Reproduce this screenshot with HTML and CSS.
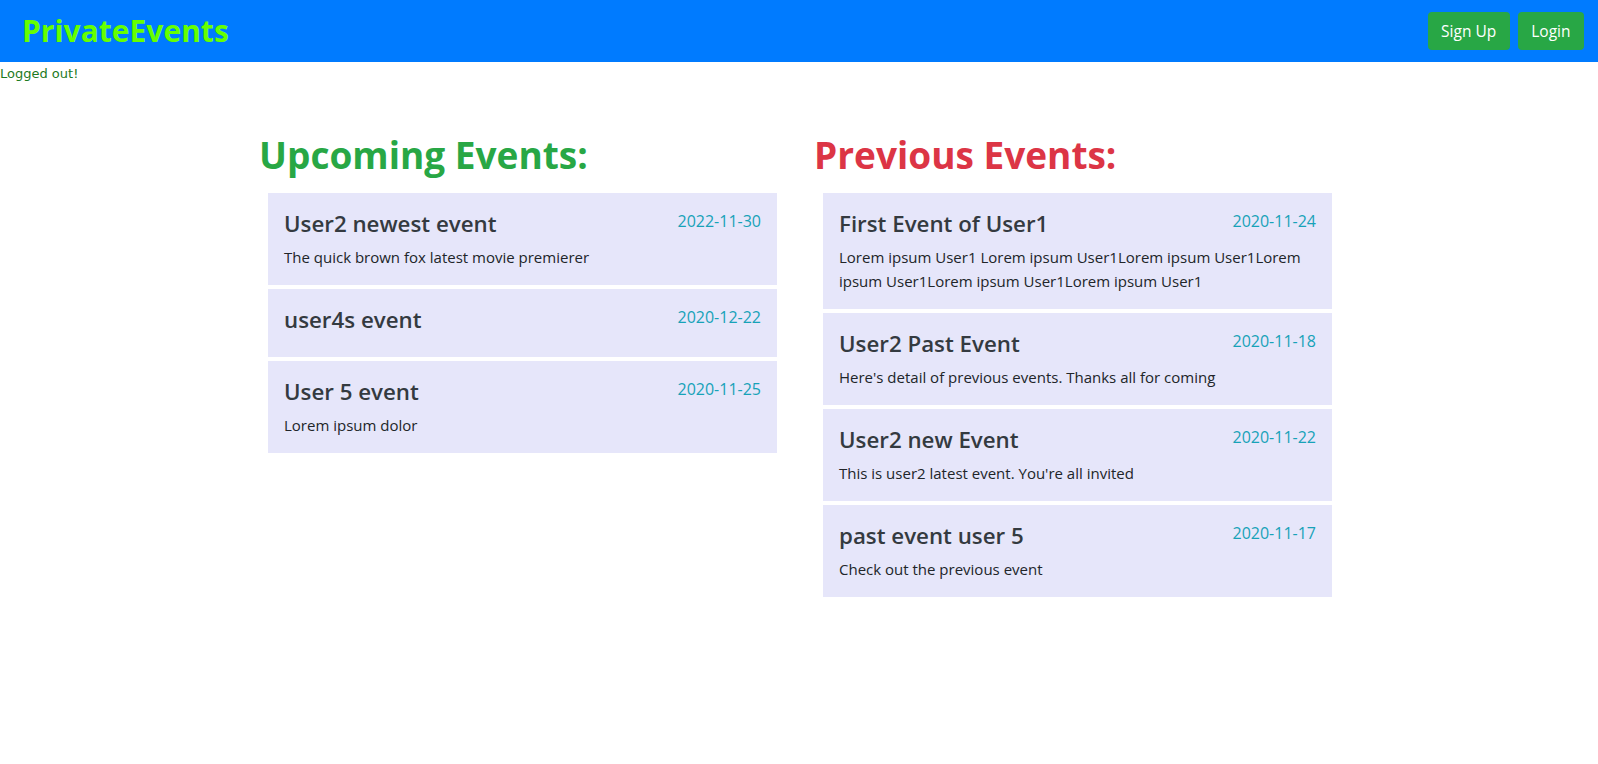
FILE: index.html
```html
<!DOCTYPE html>
<html lang="en">
<head>
<meta charset="utf-8">
<title>PrivateEvents</title>
<link rel="stylesheet" href="styles.css">
</head>
<body>
<nav class="navbar">
  <a class="brand" href="#">PrivateEvents</a>
  <div class="nav-actions">
    <a class="btn" href="#">Sign Up</a>
    <a class="btn" href="#">Login</a>
  </div>
</nav>
<p class="notice">Logged out!</p>
<main class="events">
  <section class="col">
    <h1 class="col-title upcoming">Upcoming Events:</h1>
    <div class="list">
      <article class="card">
        <div class="card-head"><h4 class="card-title">User2 newest event</h4><span class="date">2022-11-30</span></div>
        <p class="card-text">The quick brown fox latest movie premierer</p>
      </article>
      <article class="card">
        <div class="card-head"><h4 class="card-title">user4s event</h4><span class="date">2020-12-22</span></div>
      </article>
      <article class="card">
        <div class="card-head"><h4 class="card-title">User 5 event</h4><span class="date">2020-11-25</span></div>
        <p class="card-text">Lorem ipsum dolor</p>
      </article>
    </div>
  </section>
  <section class="col">
    <h1 class="col-title previous">Previous Events:</h1>
    <div class="list">
      <article class="card">
        <div class="card-head"><h4 class="card-title">First Event of User1</h4><span class="date">2020-11-24</span></div>
        <p class="card-text">Lorem ipsum User1 Lorem ipsum User1Lorem ipsum User1Lorem ipsum User1Lorem ipsum User1Lorem ipsum User1</p>
      </article>
      <article class="card">
        <div class="card-head"><h4 class="card-title">User2 Past Event</h4><span class="date">2020-11-18</span></div>
        <p class="card-text">Here's detail of previous events. Thanks all for coming</p>
      </article>
      <article class="card">
        <div class="card-head"><h4 class="card-title">User2 new Event</h4><span class="date">2020-11-22</span></div>
        <p class="card-text">This is user2 latest event. You're all invited</p>
      </article>
      <article class="card">
        <div class="card-head"><h4 class="card-title">past event user 5</h4><span class="date">2020-11-17</span></div>
        <p class="card-text">Check out the previous event</p>
      </article>
    </div>
  </section>
</main>
</body>
</html>
```

FILE: styles.css
```css
* { box-sizing: border-box; }

body {
  margin: 0;
  font-family: "Open Sans", "Noto Sans", sans-serif;
  font-size: 15px;
  line-height: 1.5;
  color: #212529;
  background: #fff;
}

a { text-decoration: none; }

.navbar {
  height: 62px;
  background: #007bff;
  display: flex;
  align-items: center;
  justify-content: space-between;
  padding: 0 14px 0 22px;
}

.brand {
  color: #66ff00;
  font-size: 30px;
  font-weight: 700;
  line-height: 1;
}

.nav-actions {
  display: flex;
  gap: 8px;
}

.btn {
  display: inline-block;
  background: #28a745;
  color: #fff;
  font-size: 15.5px;
  line-height: 24px;
  padding: 7px 13.5px;
  border-radius: 4px;
}

.notice {
  margin: 0;
  font-family: "DejaVu Sans", "Liberation Sans", sans-serif;
  font-size: 13px;
  line-height: 19px;
  padding-top: 2px;
  color: #1d7a1d;
}

.events {
  display: flex;
  gap: 37px;
  margin-left: 259px;
  padding-top: 48px;
}

.col {
  width: 518px;
}

.col-title {
  margin: 0 0 14px;
  font-size: 37px;
  font-weight: 700;
  line-height: 48px;
}

.upcoming { color: #28a745; }
.previous { color: #dc3545; }

.list {
  display: flex;
  flex-direction: column;
  gap: 4px;
  margin-left: 9px;
}

.card {
  width: 509px;
  background: #e6e6fa;
  padding: 17px 16px 16px;
}

.card-head {
  display: flex;
  justify-content: space-between;
  align-items: flex-start;
}

.card-title {
  margin: 0 0 7px;
  font-size: 22.3px;
  font-weight: 600;
  line-height: 28px;
  color: #343a40;
}

.date {
  color: #17a2b8;
  font-size: 16px;
  line-height: 24px;
  margin-top: -1px;
}

.card-text {
  margin: 0;
  line-height: 24px;
}
```
